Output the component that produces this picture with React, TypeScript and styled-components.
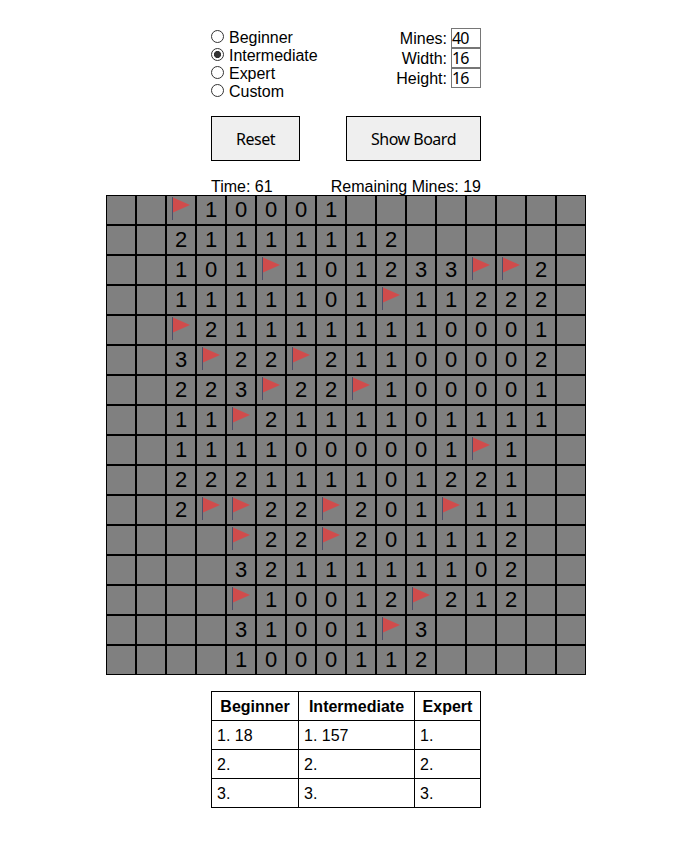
import React, { useState } from "react";
import styled, { createGlobalStyle } from "styled-components";

const GlobalStyle = createGlobalStyle`
  body {
    margin: 0;
    background: #fff;
    color: #000;
    font: 16px/18px "Liberation Sans", Arial, sans-serif;
  }
`;

const Page = styled.main`
  display: flex;
  flex-direction: column;
  align-items: center;
  width: 480px;
  margin-left: 106px;
  padding-top: 28px;
`;

const Panel = styled.section`
  width: 270px;
`;

const Settings = styled.div`
  display: flex;
  justify-content: space-between;
  height: 88px;
`;

const Levels = styled.div`
  display: flex;
  flex-direction: column;
  padding-top: 1px;
`;

const Level = styled.label`
  display: flex;
  align-items: center;
  gap: 5px;
  height: 18px;
  letter-spacing: -0.03px;
`;

const Radio = styled.input`
  appearance: none;
  box-sizing: border-box;
  width: 13px;
  height: 13px;
  margin: 0 0 3px;
  border: 1px solid #333;
  border-radius: 50%;
  background: #fff;

  &:checked {
    background: radial-gradient(circle, #333 3.2px, #fff 3.9px);
  }
`;

const Fields = styled.div`
  display: flex;
  flex-direction: column;
  align-items: flex-end;
`;

const Field = styled.label`
  display: flex;
  align-items: center;
  gap: 4px;
  height: 20px;
`;

const FieldName = styled.span`
  padding-top: 2px;
`;

const NumberInput = styled.input`
  box-sizing: border-box;
  width: 30px;
  height: 20px;
  margin: 0;
  padding: 0 0 1px;
  border: 1px solid #767676;
  font: 16px/17px "Noto Sans", Tahoma, sans-serif;
  letter-spacing: -0.8px;
`;

const Actions = styled.div`
  display: flex;
  justify-content: space-between;
`;

const Button = styled.button<{ $width: number }>`
  box-sizing: border-box;
  width: ${(p) => p.$width}px;
  height: 45px;
  padding: 0;
  border: 1px solid #000;
  background: #efefef;
  color: #000;
  font: 16px "Noto Sans", Tahoma, sans-serif;
  letter-spacing: -0.5px;
`;

const Status = styled.div`
  display: flex;
  justify-content: space-between;
  height: 17px;
  margin-top: 17px;
`;

const Board = styled.div`
  display: grid;
  grid-template-columns: repeat(16, 30px);
  grid-auto-rows: 30px;
`;

const Cell = styled.div`
  box-sizing: border-box;
  border: 1px solid #000;
  background: #808080;
  font-size: 22px;
  line-height: 28px;
  text-align: center;
`;

const FlagIcon = styled.svg`
  display: block;
  width: 28px;
  height: 28px;
`;

const Scores = styled.table`
  width: 270px;
  margin-top: 16px;
  border-collapse: collapse;
  table-layout: fixed;
`;

const ScoreColumn = styled.col<{ $width: number }>`
  width: ${(p) => p.$width}px;
`;

const Heading = styled.th`
  box-sizing: border-box;
  height: 29px;
  padding: 2px 0 0;
  border: 1px solid #000;
`;

const Score = styled.td`
  box-sizing: border-box;
  height: 29px;
  padding: 2px 5px 0;
  border: 1px solid #000;
`;

// "." is a covered square, "F" a flag, a digit the number of adjacent mines.
const rows = [
  "..F10001........",
  "..21111112......",
  "..101F101233FF2.",
  "..1111101F11222.",
  "..F211111110001.",
  "..3F22F21100002.",
  "..223F22F100001.",
  "..11F2111101111.",
  "..1111000001F1..",
  "..222111101221..",
  "..2FF22F201F11..",
  "....F22F201112..",
  "....3211111102..",
  "....F10012F212..",
  "....31001F3.....",
  "....1000112.....",
];

const levels = ["Beginner", "Intermediate", "Expert", "Custom"];

const fields = [
  ["Mines", "40"],
  ["Width", "16"],
  ["Height", "16"],
];

const scores = [
  ["1. 18", "1. 157", "1."],
  ["2.", "2.", "2."],
  ["3.", "3.", "3."],
];

const Flag = () => (
  <FlagIcon viewBox="0 0 28 28">
    <path d="M6 1.5L23 9L6 16.5Z" fill="#d04c4c" />
    <path d="M5.5 1V24" stroke="#4c5068" />
  </FlagIcon>
);

export default function App() {
  const [level, setLevel] = useState("Intermediate");

  return (
    <>
      <GlobalStyle />
      <Page>
        <Panel>
          <Settings>
            <Levels>
              {levels.map((name) => (
                <Level key={name}>
                  <Radio
                    type="radio"
                    name="level"
                    checked={level === name}
                    onChange={() => setLevel(name)}
                  />
                  {name}
                </Level>
              ))}
            </Levels>
            <Fields>
              {fields.map(([name, value]) => (
                <Field key={name}>
                  <FieldName>{name}:</FieldName>
                  <NumberInput defaultValue={value} />
                </Field>
              ))}
            </Fields>
          </Settings>
          <Actions>
            <Button $width={89}>Reset</Button>
            <Button $width={135}>Show Board</Button>
          </Actions>
          <Status>
            <span>Time: 61</span>
            <span>Remaining Mines: 19</span>
          </Status>
        </Panel>
        <Board>
          {rows.map((row, y) =>
            row.split("").map((value, x) => (
              <Cell key={`${x}-${y}`}>
                {value === "F" ? <Flag /> : value === "." ? null : value}
              </Cell>
            ))
          )}
        </Board>
        <Scores>
          <colgroup>
            <ScoreColumn $width={87} />
            <ScoreColumn $width={116} />
            <ScoreColumn $width={66} />
          </colgroup>
          <thead>
            <tr>
              <Heading>Beginner</Heading>
              <Heading>Intermediate</Heading>
              <Heading>Expert</Heading>
            </tr>
          </thead>
          <tbody>
            {scores.map((line, i) => (
              <tr key={i}>
                {line.map((score, j) => (
                  <Score key={j}>{score}</Score>
                ))}
              </tr>
            ))}
          </tbody>
        </Scores>
      </Page>
    </>
  );
}
